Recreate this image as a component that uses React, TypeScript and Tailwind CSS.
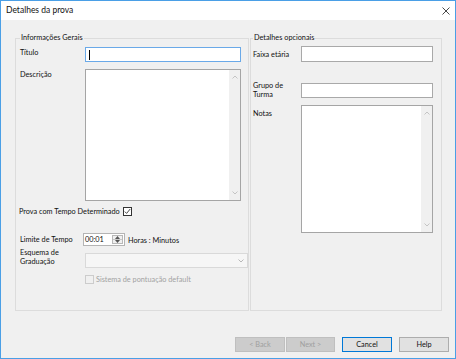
import React from 'react'

function Chevron({ up, color = '#c4c4c4' }: { up?: boolean; color?: string }) {
  return (
    <svg width="6" height="4" viewBox="0 0 6 4">
      <path
        d={up ? 'M0.5 3.5 L3 1 L5.5 3.5' : 'M0.5 0.5 L3 3 L5.5 0.5'}
        stroke={color}
        strokeWidth="1"
        fill="none"
      />
    </svg>
  )
}

function TextBox({ className }: { className: string }) {
  return (
    <div className={`flex border border-[#a5a5a5] bg-white ${className}`}>
      <textarea className="flex-1 min-w-0 resize-none bg-white outline-none" />
      <div className="w-[11px] bg-[#f0f0f0] flex flex-col items-center justify-between py-[5px]">
        <Chevron up />
        <Chevron />
      </div>
    </div>
  )
}

function Field({ className }: { className: string }) {
  return <input type="text" className={`border border-[#a9a9a9] bg-white outline-none px-[2px] ${className}`} />
}

export default function App() {
  return (
    <div className="w-[456px] h-[359px] flex flex-col border border-[#4a9fe6] bg-[#f0f0f0] text-[7.3px] leading-[9px] text-[#111] font-['Lato','Liberation_Sans',sans-serif]">
      {/* title bar */}
      <div className="h-[19px] bg-white flex items-center justify-between pl-[5px] pr-[5px]">
        <span className="text-[8.5px]">Detalhes da prova</span>
        <svg width="8" height="8" viewBox="0 0 8 8">
          <path d="M0.5 0.5 L7.5 7.5 M7.5 0.5 L0.5 7.5" stroke="#333" strokeWidth="0.9" />
        </svg>
      </div>

      <div className="flex-1 flex flex-col">
        <div className="flex gap-[1px] pl-[14px] mt-[13px]">
          {/* Informações Gerais */}
          <fieldset className="w-[234px] min-w-0 h-[278px] border border-[#dcdcdc] px-[4px]">
            <legend className="px-[1px] leading-[10px]">Informações Gerais</legend>

            <div className="flex items-start mt-[4px]">
              <span className="w-[65px] shrink-0 pt-[1px]">Título</span>
              <div className="w-[156px] shrink-0 h-[15px] border border-[#6aa9e8] bg-white flex items-center pl-[3px]">
                <div className="w-[1px] h-[10px] bg-black" />
              </div>
            </div>

            <div className="flex items-start mt-[7px]">
              <span className="w-[65px] shrink-0 pt-[1px]">Descrição</span>
              <TextBox className="w-[156px] shrink-0 h-[132px]" />
            </div>

            <div className="flex items-center gap-[3px] mt-[6px] -ml-[1px]">
              <span>Prova com Tempo Determinado</span>
              <div className="w-[9px] h-[9px] border border-[#333] bg-white flex items-center justify-center">
                <svg width="7" height="7" viewBox="0 0 7 7">
                  <path d="M0.8 3.6 L2.6 5.4 L6.2 1" stroke="#333" strokeWidth="0.9" fill="none" />
                </svg>
              </div>
            </div>

            <div className="flex items-center mt-[17px]">
              <span className="w-[63px] shrink-0">Limite de Tempo</span>
              <div className="w-[42px] shrink-0 h-[13px] flex border border-[#b4b4b4] bg-white">
                <span className="flex-1 pl-[1px] leading-[11px]">00:01</span>
                <div className="w-[11px] my-[1px] mr-[1px] flex flex-col border border-[#b8b8b8] bg-[#f0f0f0]">
                  <div className="flex-1 flex items-center justify-center border-b border-[#c8c8c8]">
                    <svg width="5" height="3" viewBox="0 0 5 3"><path d="M0 3 L2.5 0 L5 3 Z" fill="#555" /></svg>
                  </div>
                  <div className="flex-1 flex items-center justify-center">
                    <svg width="5" height="3" viewBox="0 0 5 3"><path d="M0 0 L2.5 3 L5 0 Z" fill="#555" /></svg>
                  </div>
                </div>
              </div>
              <span className="ml-[3px] mt-[2px]">Horas : Minutos</span>
            </div>

            <div className="flex items-start mt-[2px]">
              <span className="w-[65px] shrink-0">
                Esquema de
                <br />
                Graduação
              </span>
              <div className="w-[163px] shrink-0 h-[15px] mt-[5px] border border-[#d9d9d9] bg-[#f6f6f6] flex items-center justify-end pr-[3px]">
                <Chevron color="#b8b8b8" />
              </div>
            </div>

            <div className="flex items-center gap-[2px] mt-[7px] ml-[65px]">
              <div className="w-[9px] h-[9px] border border-[#cccccc] bg-[#f0f0f0]" />
              <span className="text-[#a2a2a2]">Sistema de pontuação default</span>
            </div>
          </fieldset>

          {/* Detalhes opcionais */}
          <fieldset className="w-[192px] min-w-0 h-[278px] border border-[#dcdcdc] pl-[2px]">
            <legend className="px-[1px] leading-[10px]">Detalhes opcionais</legend>

            <div className="flex items-center mt-[3px]">
              <span className="w-[48px] shrink-0">Faixa etária</span>
              <Field className="w-[132px] shrink-0 h-[16px]" />
            </div>

            <div className="flex items-center mt-[19px]">
              <span className="w-[48px] shrink-0">
                Grupo de
                <br />
                Turma
              </span>
              <Field className="w-[132px] shrink-0 h-[15px]" />
            </div>

            <div className="flex items-start mt-[6px]">
              <span className="w-[48px] shrink-0 pt-[4px]">Notas</span>
              <TextBox className="w-[132px] shrink-0 h-[128px]" />
            </div>
          </fieldset>
        </div>

        {/* buttons */}
        <div className="flex justify-end pr-[6px] mt-[26px]">
          <button className="w-[50px] h-[15px] border border-[#bfbfbf] bg-[#cccccc] text-[#a0a0a0]">&lt; Back</button>
          <button className="w-[49px] h-[15px] ml-[1px] border border-[#bfbfbf] bg-[#cccccc] text-[#a0a0a0]">Next &gt;</button>
          <button className="w-[50px] h-[15px] ml-[7px] border border-[#0078d7] bg-[#e1e1e1]">Cancel</button>
          <button className="w-[50px] h-[15px] ml-[7px] border border-[#adadad] bg-[#e1e1e1]">Help</button>
        </div>
      </div>
    </div>
  )
}
